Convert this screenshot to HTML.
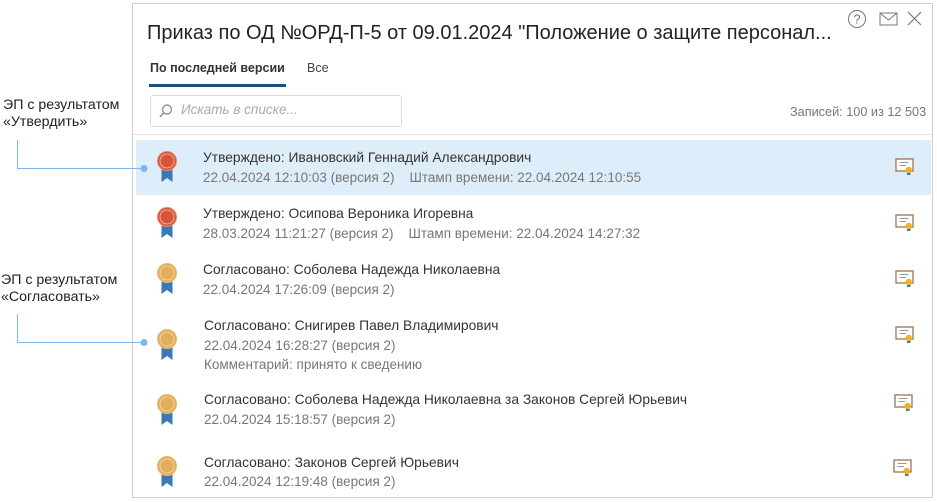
<!DOCTYPE html>
<html><head><meta charset="utf-8"><style>
*{margin:0;padding:0;box-sizing:border-box}
body{width:937px;height:502px;background:#fff;font-family:"Liberation Sans","DejaVu Sans",sans-serif;position:relative;overflow:hidden;color:#333}
.abs{position:absolute;white-space:nowrap}
.win{position:absolute;left:132px;top:3px;width:801px;height:495px;border:1px solid #cfcfcf;background:#fff}
.lbl{font-size:14.2px;color:#222;line-height:17px}
.t1{font-size:13.8px;color:#333}
.t2{font-size:13.5px;color:#777}
</style></head><body>
<div class="win"></div>
<div class="abs" style="left:147px;top:22px;font-size:20px;color:#222">Приказ по ОД №ОРД-П-5 от 09.01.2024 "Положение о защите персонал...</div>
<svg class="abs" style="left:846px;top:8px" width="84" height="22" viewBox="0 0 84 22">
<circle cx="11" cy="11" r="8.5" fill="none" stroke="#777" stroke-width="1"/>
<text x="11" y="15.5" font-size="13" text-anchor="middle" fill="#777" font-family="Liberation Sans">?</text>
<rect x="34" y="5" width="17" height="12" fill="none" stroke="#777"/>
<path d="M34 5 L42.5 12 L51 5" fill="none" stroke="#777"/>
<path d="M62 4 L75 17 M75 4 L62 17" stroke="#777" stroke-width="1.2"/>
</svg>
<div class="abs" style="left:150px;top:61px;font-size:12.5px;font-weight:bold;color:#333">По последней версии</div>
<div class="abs" style="left:307px;top:61px;font-size:12.5px;color:#444">Все</div>
<div class="abs" style="left:149px;top:84px;width:137px;height:3px;background:#1f4f7e"></div>
<div class="abs" style="left:150px;top:95px;width:252px;height:32px;border:1px solid #ddd;border-radius:3px"></div>
<svg class="abs" style="left:158px;top:103px" width="16" height="16"><circle cx="9" cy="6.5" r="4.5" fill="none" stroke="#8a97a8" stroke-width="1.4"/><path d="M5.8 9.8 L2 13.8" stroke="#8a97a8" stroke-width="1.6"/></svg>
<div class="abs" style="left:181px;top:102px;font-size:13.5px;font-style:italic;color:#aaa">Искать в списке...</div>
<div class="abs" style="left:790px;top:105px;font-size:12.7px;color:#777">Записей: 100 из 12 503</div>
<div class="abs" style="left:133px;top:134px;width:799px;height:1px;background:#e3e3e3"></div>
<div class="abs" style="left:136px;top:140px;width:795px;height:55px;background:#deedfa"></div>

<div class="abs lbl" style="left:3px;top:97px">ЭП с результатом<br>«Утвердить»</div>
<div class="abs lbl" style="left:1px;top:272px">ЭП с результатом<br>«Согласовать»</div>
<svg class="abs" style="left:0;top:0" width="160" height="360">
<path d="M17.5 140 V168.5 H144" fill="none" stroke="#7fb6ee" stroke-width="1"/><circle cx="144" cy="168.5" r="3.5" fill="#7fb6ee"/>
<path d="M17.5 314 V342.5 H144" fill="none" stroke="#7fb6ee" stroke-width="1"/><circle cx="144" cy="342.5" r="3.5" fill="#7fb6ee"/>
</svg>

<svg width="0" height="0" style="position:absolute"><defs>
<g id="br"><path d="M-5.5 6 V21 L0 17 L5.5 21 V6Z" fill="#3a78b8"/></g>
<g id="cert"><rect x="1" y="1" width="17" height="12" fill="#fff" stroke="#a0724a" stroke-width="1.3"/><path d="M4.5 4.5 H13.5 M4.5 7.5 H11" stroke="#999"/><rect x="12" y="13" width="3.5" height="4" fill="#3a78b8"/><circle cx="13.7" cy="12" r="3.2" fill="#f0b020"/></g>
</defs></svg>

<svg class="abs" style="left:150px;top:140px" width="40" height="360" viewBox="0 0 40 360">
<g transform="translate(17,21)"><use href="#br"/><circle r="9.5" fill="#d9553a" stroke="#e98a70"/><circle r="7" fill="none" stroke="#f7c0b0" stroke-width="0.8"/></g>
<g transform="translate(17,77)"><use href="#br"/><circle r="9.5" fill="#d9553a" stroke="#e98a70"/><circle r="7" fill="none" stroke="#f7c0b0" stroke-width="0.8"/></g>
<g transform="translate(17,133)"><use href="#br"/><circle r="9.5" fill="#e2ad5c" stroke="#e9bb70"/><circle r="7" fill="none" stroke="#f5dba8" stroke-width="0.8"/></g>
<g transform="translate(17,199)"><use href="#br"/><circle r="9.5" fill="#e2ad5c" stroke="#e9bb70"/><circle r="7" fill="none" stroke="#f5dba8" stroke-width="0.8"/></g>
<g transform="translate(17,264)"><use href="#br"/><circle r="9.5" fill="#e2ad5c" stroke="#e9bb70"/><circle r="7" fill="none" stroke="#f5dba8" stroke-width="0.8"/></g>
<g transform="translate(17,326)"><use href="#br"/><circle r="9.5" fill="#e2ad5c" stroke="#e9bb70"/><circle r="7" fill="none" stroke="#f5dba8" stroke-width="0.8"/></g>
</svg>
<svg class="abs" style="left:895px;top:158px" width="22" height="18"><use href="#cert"/></svg>
<svg class="abs" style="left:895px;top:214px" width="22" height="18"><use href="#cert"/></svg>
<svg class="abs" style="left:895px;top:270px" width="22" height="18"><use href="#cert"/></svg>
<svg class="abs" style="left:895px;top:326px" width="22" height="18"><use href="#cert"/></svg>
<svg class="abs" style="left:894px;top:394px" width="22" height="18"><use href="#cert"/></svg>
<svg class="abs" style="left:893px;top:459px" width="22" height="18"><use href="#cert"/></svg>

<div class="abs t1" style="left:203px;top:150px">Утверждено: Ивановский Геннадий Александрович</div>
<div class="abs t2" style="left:203px;top:170px">22.04.2024 12:10:03 (версия 2)&nbsp;&nbsp;&nbsp;&nbsp;Штамп времени: 22.04.2024 12:10:55</div>
<div class="abs t1" style="left:203px;top:206px">Утверждено: Осипова Вероника Игоревна</div>
<div class="abs t2" style="left:203px;top:226px">28.03.2024 11:21:27 (версия 2)&nbsp;&nbsp;&nbsp;&nbsp;Штамп времени: 22.04.2024 14:27:32</div>
<div class="abs t1" style="left:203px;top:262px">Согласовано: Соболева Надежда Николаевна</div>
<div class="abs t2" style="left:203px;top:282px">22.04.2024 17:26:09 (версия 2)</div>
<div class="abs t1" style="left:204px;top:318px">Согласовано: Снигирев Павел Владимирович</div>
<div class="abs t2" style="left:204px;top:338px">22.04.2024 16:28:27 (версия 2)</div>
<div class="abs t2" style="left:204px;top:357px">Комментарий: принято к сведению</div>
<div class="abs t1" style="left:204px;top:392px">Согласовано: Соболева Надежда Николаевна за Законов Сергей Юрьевич</div>
<div class="abs t2" style="left:204px;top:412px">22.04.2024 15:18:57 (версия 2)</div>
<div class="abs t1" style="left:204px;top:455px">Согласовано: Законов Сергей Юрьевич</div>
<div class="abs t2" style="left:204px;top:474px">22.04.2024 12:19:48 (версия 2)</div>
</body></html>
